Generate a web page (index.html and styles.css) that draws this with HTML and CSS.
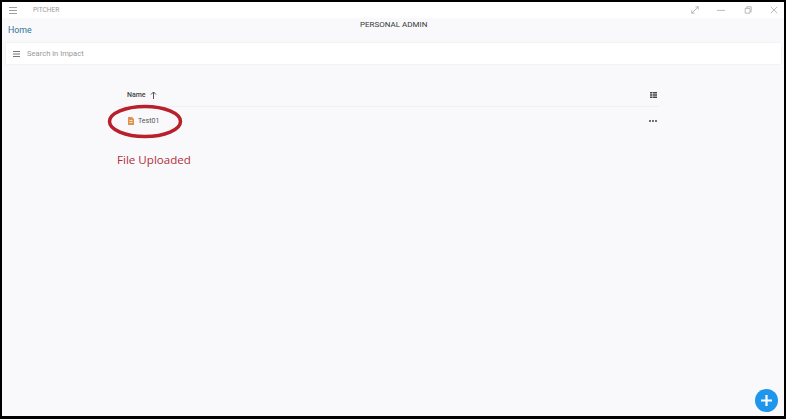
FILE: index.html
```html
<!DOCTYPE html>
<html lang="en">
<head>
  <meta charset="UTF-8" />
  <title>Pitcher</title>
  <link rel="stylesheet" href="styles.css">
</head>
<body>
  <div class="app">

    <!-- Title bar -->
    <div class="titlebar">
      <svg class="burger" width="8" height="7" viewBox="0 0 8 7"><path d="M0 .5h8M0 3.500h8M0 6.500h8" stroke="#a0a0a0" fill="none"/></svg>
      <span class="app-name">PITCHER</span>
      <div class="win-icons">
        <svg width="10" height="10" viewBox="0 0 10 10"><path d="M1 9l8-8M5.500 1H9v3.500M1 5.500V9h3.500" stroke="#aaa" fill="none"/></svg>
        <svg width="10" height="10" viewBox="0 0 10 10"><path d="M0 5.500h10" stroke="#aaa" fill="none"/></svg>
        <svg width="10" height="10" viewBox="0 0 10 10"><path d="M1.500 3h6v6h-6zM3.500 3V1h5.500v6H7.500" stroke="#aaa" fill="none"/></svg>
        <svg width="10" height="10" viewBox="0 0 10 10"><path d="M1 1l8 8M9 1l-8 8" stroke="#aaa" fill="none"/></svg>
      </div>
    </div>

    <!-- Header -->
    <div class="header">
      <a class="home">Home</a>
      <span class="page-title">PERSONAL ADMIN</span>
    </div>

    <!-- Search -->
    <div class="search">
      <svg width="7" height="6" viewBox="0 0 7 6"><path d="M0 .5h7M0 3h7M0 5.500h7" stroke="#777" fill="none"/></svg>
      <span>Search in Impact</span>
    </div>

    <!-- File list -->
    <div class="list">
      <div class="list-head">
        <span class="col-name">Name</span>
        <svg width="7" height="8" viewBox="0 0 7 8"><path d="M3.500 8V1M1 3.500l2.500-2.500 2.500 2.500" stroke="#555" fill="none"/></svg>
        <svg class="view-icon" width="7" height="6" viewBox="0 0 7 6"><path d="M0 0h2v1.500H0zM2.500 0H7v1.500H2.500zM0 2.200h2v1.500H0zM2.500 2.200H7v1.500H2.500zM0 4.400h2v1.500H0zM2.500 4.400H7v1.500H2.500z" fill="#444"/></svg>
      </div>
      <div class="list-row">
        <svg width="6" height="8" viewBox="0 0 6 8"><path d="M0 0h4l2 2v6H0z" fill="#df9350"/><path d="M1.500 3.500h3M1.500 5.500h3" stroke="#fff" stroke-width=".7"/></svg>
        <span class="file-name">Test01</span>
        <div class="dots"><i></i><i></i><i></i></div>
        <svg class="circle" width="76" height="35" viewBox="0 0 76 35"><ellipse cx="38" cy="17.500" rx="35.500" ry="15" fill="none" stroke="#b8202c" stroke-width="3.500"/></svg>
      </div>
      <div class="note">File Uploaded</div>
    </div>

    <button class="fab">
      <svg width="11" height="11" viewBox="0 0 11 11"><path d="M5.500 0v11M0 5.500h11" stroke="#fff" stroke-width="2.200"/></svg>
    </button>
  </div>
</body>
</html>
```

FILE: styles.css
```css
html, body {
  margin: 0;
  padding: 0;
  height: 100%;
}

body {
  background-color: #000;
  font-family: 'Roboto', sans-serif;
  overflow: hidden;
}

.app {
  box-sizing: border-box;
  width: 782px;
  height: 414px;
  margin: 2px 2px 3px 2px;
  background-color: #f9f9fc;
  position: relative;
  display: flex;
  flex-direction: column;
}

.titlebar {
  height: 16px;
  background-color: #fff;
  display: flex;
  align-items: center;
  flex-shrink: 0;
}

.burger {
  margin-left: 7px;
}

.app-name {
  margin-left: 16px;
  font-size: 6.500px;
  color: #9a9a9a;
}

.win-icons {
  margin-left: auto;
  margin-right: 6px;
  display: flex;
  gap: 18.500px;
}

.win-icons svg {
  width: 8px;
  height: 8px;
}

.header {
  height: 25px;
  flex-shrink: 0;
  position: relative;
}

.home {
  position: absolute;
  left: 6px;
  top: 7px;
  font-size: 8.800px;
  color: #2f7596;
}

.page-title {
  position: absolute;
  left: 358px;
  top: 2px;
  font-size: 8px;
  color: #3a3a3a;
}

.search {
  height: 21px;
  margin: 0 3px 0 4px;
  background-color: #fff;
  box-shadow: 0 0 2px rgba(0, 0, 0, 0.08);
  display: flex;
  align-items: center;
  padding-left: 7px;
  gap: 7px;
  font-size: 7.600px;
  color: #999;
  flex-shrink: 0;
}

.list {
  width: 542px;
  margin: 20px 0 0 115px;
  font-size: 7px;
  color: #444;
}

.list-head {
  height: 23px;
  box-sizing: border-box;
  border-bottom: 1px solid #f0f0f2;
  display: flex;
  align-items: center;
  gap: 4px;
  padding: 0 2px 0 10px;
}

.col-name {
  font-weight: 500;
}

.view-icon {
  margin-left: auto;
}

.list-row {
  height: 28px;
  display: flex;
  align-items: center;
  gap: 4px;
  padding: 0 1px 0 11px;
  position: relative;
}

.file-name {
  color: #555;
}

.dots {
  margin-left: auto;
  margin-right: 1px;
  display: flex;
  gap: 1px;
}

.dots i {
  width: 2px;
  height: 2px;
  border-radius: 50%;
  background-color: #444;
}

.circle {
  position: absolute;
  left: -10px;
  top: -3px;
}

.note {
  margin-top: 17px;
  font-family: 'Open Sans', sans-serif;
  font-size: 11.600px;
  color: #b0303a;
}

.fab {
  position: absolute;
  right: 6px;
  bottom: 4px;
  width: 23px;
  height: 23px;
  border: none;
  border-radius: 50%;
  padding: 0;
  background-color: #1e96ec;
  display: flex;
  align-items: center;
  justify-content: center;
}
```
